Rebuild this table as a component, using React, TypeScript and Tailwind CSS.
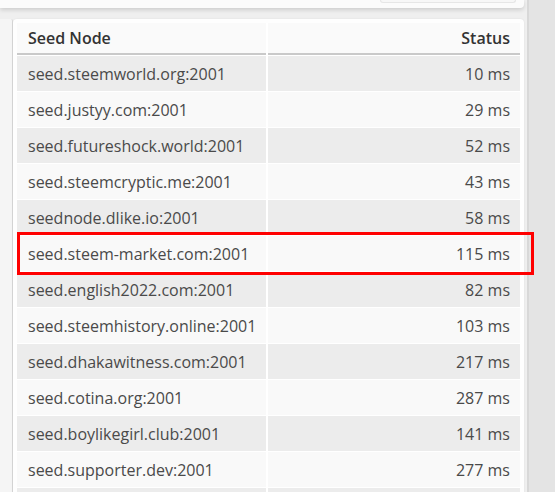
import React from "react";

const rows: [string, string][] = [
  ["seed.steemworld.org:2001", "10 ms"],
  ["seed.justyy.com:2001", "29 ms"],
  ["seed.futureshock.world:2001", "52 ms"],
  ["seed.steemcryptic.me:2001", "43 ms"],
  ["seednode.dlike.io:2001", "58 ms"],
  ["seed.steem-market.com:2001", "115 ms"],
  ["seed.english2022.com:2001", "82 ms"],
  ["seed.steemhistory.online:2001", "103 ms"],
  ["seed.dhakawitness.com:2001", "217 ms"],
  ["seed.cotina.org:2001", "287 ms"],
  ["seed.boylikegirl.club:2001", "141 ms"],
  ["seed.supporter.dev:2001", "277 ms"],
  ["", ""],
];

export default function App() {
  return (
    <div className="relative w-[555px] h-[492px] overflow-hidden flex bg-[#efefef] font-['Open_Sans',sans-serif]">
      <div className="w-[527px] h-[492px] flex flex-col">
        <div className="shrink-0 w-[524px] h-[8px] bg-[#fbfbfb] shadow-[0_2px_4px_rgba(0,0,0,0.14)] rounded-br-[4px] flex justify-end pr-[8px]">
          <div className="w-[136px] h-[3px] bg-[#f7f7f7] border border-t-0 border-[#e6e6e6] rounded-b-[3px]" />
        </div>
        <div className="shrink-0 flex mt-[11px]">
          <div className="w-[13px] bg-[#f5f5f5] border-r border-[#d8d8d8] rounded-tr-[2px]" />
          <div className="w-[511px] bg-[#fefefe] rounded-t-[4px] px-[4px] pt-[4px] shadow-[0_0_2px_rgba(0,0,0,0.08)]">
            <div className="grid grid-cols-[249px_1fr] gap-x-[2px] gap-y-px bg-white">
              <div className="h-[32px] bg-[#fafafa] border-b-2 border-[#c9c9c9] pl-[11px] flex items-center text-[16px] font-semibold text-[#333]">
                Seed Node
              </div>
              <div className="h-[32px] bg-[#fafafa] border-b-2 border-[#c9c9c9] pr-[10px] flex items-center justify-end text-[16px] font-semibold text-[#333]">
                Status
              </div>
              {rows.map(([n, s], i) => {
                const bg = i % 2 === 0 ? "bg-[#ececec]" : "bg-[#f9f9f9]";
                return (
                  <React.Fragment key={i}>
                    <div className={`${bg} h-[35px] pl-[11px] flex items-center text-[16px] text-[#4a4a4a]`}>{n}</div>
                    <div className={`${bg} h-[35px] pr-[10px] flex items-center justify-end text-[16px] text-[#4a4a4a]`}>{s}</div>
                  </React.Fragment>
                );
              })}
            </div>
          </div>
        </div>
      </div>
      <div className="flex-1 bg-[#e4e4e4] border-l-2 border-[#d8d8d8]" />
      <div className="absolute left-[17px] top-[232px] w-[517px] h-[43px] border-[3px] border-[#ff0000]" />
    </div>
  );
}
